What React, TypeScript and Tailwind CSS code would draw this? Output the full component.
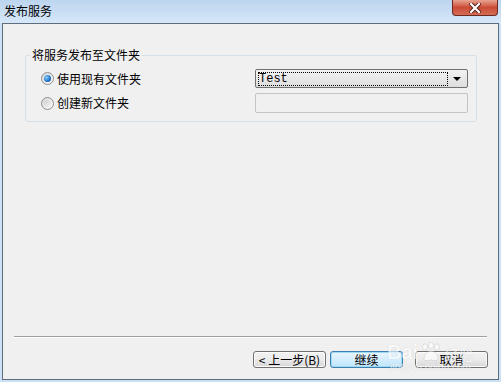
import React from 'react'

const cjk = "font-['Microsoft_YaHei','Noto_Sans_CJK_SC',sans-serif]"

function Radio({ checked }: { checked?: boolean }) {
  return (
    <span className="w-[13px] h-[13px] rounded-full border border-[#8e8f8f] bg-gradient-to-br from-[#d8d8d8] to-[#fbfbfb] flex items-center justify-center shrink-0">
      {checked ? (
        <span className="w-[7px] h-[7px] rounded-full bg-[radial-gradient(circle_at_35%_35%,#8fd0ff,#1c6fc4_60%,#0b3f8a)]" />
      ) : (
        <span className="w-[7px] h-[7px] rounded-full bg-gradient-to-br from-[#cfcfcf] to-[#f4f4f4]" />
      )}
    </span>
  )
}

function Button({ label, primary }: { label: string; primary?: boolean }) {
  return (
    <button
      className={`h-[17px] w-[73px] rounded-[3px] border text-[12px] leading-none flex items-center justify-center text-black ${cjk} ${
        primary
          ? 'border-[#3c7fb1] shadow-[inset_0_0_0_1px_#9fdbf5] bg-gradient-to-b from-[#eaf6fd] to-[#bee6fd]'
          : 'border-[#707070] shadow-[inset_0_0_0_1px_#fcfcfc] bg-gradient-to-b from-[#f2f2f2] via-[#ebebeb] to-[#d6d6d6]'
      }`}
    >
      {label}
    </button>
  )
}

export default function App() {
  return (
    <div className="w-[501px] h-[382px] bg-[#cde1f6] flex flex-col relative overflow-hidden">
      <div className="h-[23px] shrink-0 bg-gradient-to-b from-[#bcd5ef] to-[#d6e7f8] flex items-start">
        <span className={`pl-[4px] pt-[3px] text-[12px] leading-[16px] text-black ${cjk}`}>发布服务</span>
      </div>
      <div className="absolute right-[3px] top-0 w-[46px] h-[16px] rounded-b-[4px] border border-t-0 border-[#6b2b23] bg-gradient-to-b from-[#e6a391] via-[#cb4a35] to-[#d36c55] flex items-center justify-center">
        <svg width="12" height="10" viewBox="0 0 12 10">
          <path d="M2 1 L10 9 M10 1 L2 9" stroke="#4a1a14" strokeWidth="4" strokeLinecap="square" />
          <path d="M2 1 L10 9 M10 1 L2 9" stroke="#ffffff" strokeWidth="2.2" strokeLinecap="square" />
        </svg>
      </div>

      <div className="mx-[2px] mb-[2px] flex-1 border border-[#5d6d7e] bg-[#f0f0f0] flex flex-col relative">
        <fieldset className="mt-[23px] ml-[22px] mr-[21px] border border-[#d5dfe5] rounded-[3px] px-[15px] pr-[8px] pb-[8px] pt-[6px]">
          <legend className={`-ml-[11px] px-[2px] text-[12px] leading-[16px] text-black ${cjk}`}>将服务发布至文件夹</legend>
          <div className="flex flex-col gap-[5px]">
            <div className="flex items-center">
              <div className="flex-1 flex items-center gap-[3px]">
                <Radio checked />
                <span className={`text-[12px] leading-none text-black ${cjk}`}>使用现有文件夹</span>
              </div>
              <div className="w-[213px] h-[19px] rounded-[2px] border border-[#707070] bg-gradient-to-b from-[#f3f3f3] to-[#dddddd] flex items-center px-[2px]">
                <div className="flex-1 h-[14px] border border-dotted border-black flex items-center">
                  <span className="font-['Liberation_Mono',monospace] text-[12px] leading-none text-black">Test</span>
                </div>
                <div className="w-[17px] flex justify-center">
                  <svg width="8" height="4" viewBox="0 0 8 4">
                    <path d="M0 0 H8 L4 4 Z" fill="#000" />
                  </svg>
                </div>
              </div>
            </div>
            <div className="flex items-center">
              <div className="flex-1 flex items-center gap-[3px]">
                <Radio />
                <span className={`text-[12px] leading-none text-black ${cjk}`}>创建新文件夹</span>
              </div>
              <div className="w-[213px] h-[20px] rounded-[2px] border border-[#c4c4c4] bg-[#f0f0f0]" />
            </div>
          </div>
        </fieldset>

        <div className="flex-1" />

        <div className="mx-[11px] border-t border-[#a0a0a0] border-b border-b-white" />

        <div className="mt-[13px] mb-[11px] mr-[10px] flex justify-end items-center">
          <Button label="< 上一步(B)" />
          <div className="w-[4px]" />
          <Button label="继续" primary />
          <div className="w-[12px]" />
          <Button label="取消" />
        </div>

        <div className="absolute left-[384px] top-[318px] flex flex-col items-center pointer-events-none opacity-60">
          <div className="flex items-end gap-[2px]">
            <span className="font-['Liberation_Sans',sans-serif] text-[20px] leading-none font-bold text-white [text-shadow:0_0_1px_#b0b0b0]">Bai</span>
            <svg width="22" height="20" viewBox="0 0 22 20">
              <g fill="#fff" stroke="#b8b8b8" strokeWidth="0.6">
                <ellipse cx="5" cy="5" rx="2.5" ry="3.2" />
                <ellipse cx="11" cy="3.5" rx="2.5" ry="3.2" />
                <ellipse cx="17" cy="5" rx="2.5" ry="3.2" />
                <path d="M4 17 C4 11 9 9 11 9 C13 9 18 11 18 17 C18 19 15 19 11 18 C7 19 4 19 4 17 Z" />
              </g>
            </svg>
            <span className={`text-[15px] leading-none text-white [text-shadow:0_0_1px_#b0b0b0] ${cjk}`}>经验</span>
          </div>
          <span className="font-['Liberation_Sans',sans-serif] text-[10px] leading-none text-white [text-shadow:0_0_1px_#b0b0b0]">jingyan.baidu.com</span>
        </div>
      </div>
    </div>
  )
}
